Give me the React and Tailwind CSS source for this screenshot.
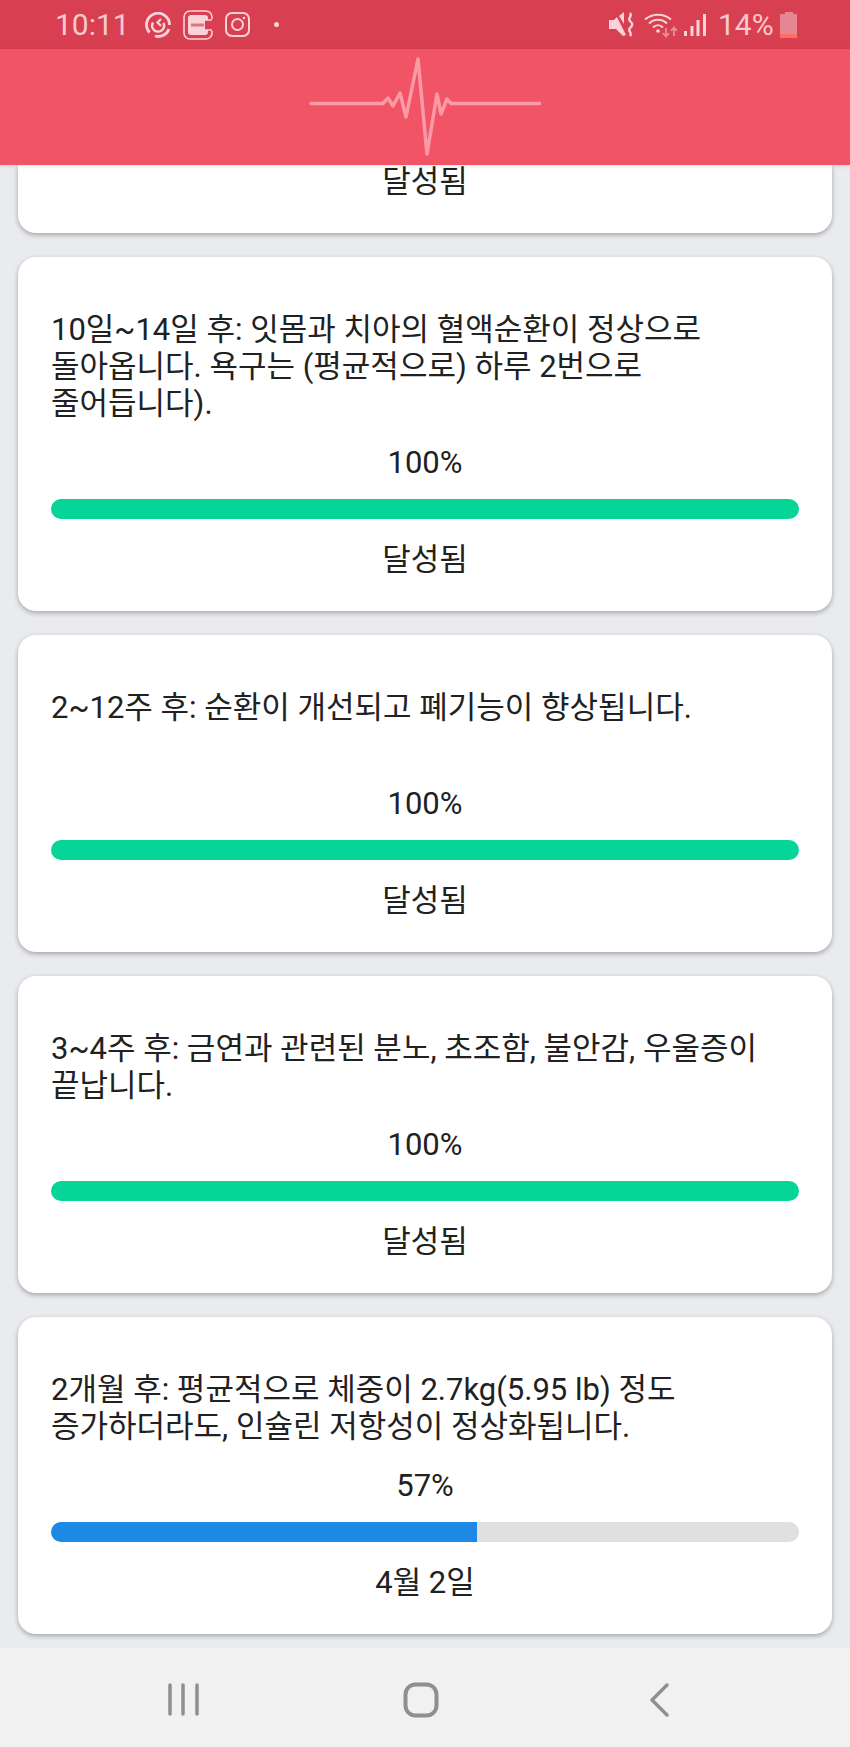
import React from 'react';

const cards = [
  { text: '10일~14일 후: 잇몸과 치아의 혈액순환이 정상으로 돌아옵니다. 욕구는 (평균적으로) 하루 2번으로 줄어듭니다).', percent: 100, label: '달성됨' },
  { text: '2~12주 후: 순환이 개선되고 폐기능이 향상됩니다.', percent: 100, label: '달성됨' },
  { text: '3~4주 후: 금연과 관련된 분노, 초조함, 불안감, 우울증이 끝납니다.', percent: 100, label: '달성됨' },
  { text: '2개월 후: 평균적으로 체중이 2.7kg(5.95 lb) 정도 증가하더라도, 인슐린 저항성이 정상화됩니다.', percent: 57, label: '4월 2일' },
];

function StatusBar() {
  return (
    <div className="h-[49px] shrink-0 bg-[#d83f50] flex items-center pl-[55px] pr-[53px] text-[#f9c9ce]">
      <span className="w-[72px] text-[30px] leading-[36px] whitespace-nowrap">10:11</span>
      <div className="flex items-center ml-[18px]">
        {/* sync app icon */}
        <svg width="26" height="26" viewBox="0 0 26 26" fill="none" stroke="#f9d3d7" strokeWidth="2.800">
          <path d="M4.500 20.500A11.500 11.500 0 1 1 24.500 13" />
          <path d="M24 17A11.500 11.500 0 0 1 10 24" />
          <path d="M8 10.500A6 6 0 1 0 18.500 11" strokeWidth="2.400" />
          <path d="M16 7l-3.500 3.500 3.500 3.500" strokeWidth="2.200" />
        </svg>
        {/* square app icon */}
        <svg width="30" height="30" viewBox="0 0 30 30" fill="none" className="ml-[12px]">
          <path d="M29 9V7a6 6 0 0 0-6-6H7a6 6 0 0 0-6 6v16a6 6 0 0 0 6 6h16a6 6 0 0 0 6-6v-2" stroke="#f9d3d7" strokeWidth="1.600" />
          <path d="M8 5h14a3 3 0 0 1 3 3v2h-3v10h3v2a3 3 0 0 1-3 3H8a3 3 0 0 1-3-3V8a3 3 0 0 1 3-3z" fill="#f9d3d7" />
          <path d="M22 10h7M22 20h7" stroke="#f9d3d7" strokeWidth="1.600" />
          <rect x="8" y="13.500" width="13" height="3" fill="#d97784" />
        </svg>
        {/* instagram */}
        <svg width="25" height="25" viewBox="0 0 25 25" fill="none" stroke="#f9d3d7" strokeWidth="2" className="ml-[12px]">
          <rect x="1" y="1" width="23" height="23" rx="6" />
          <circle cx="12.500" cy="12.500" r="5.500" />
          <circle cx="19" cy="6" r="1.300" fill="#f9d3d7" stroke="none" />
        </svg>
        <div className="w-[5px] h-[5px] rounded-full bg-[#f9d3d7] ml-[24px]" />
      </div>
      <div className="flex items-center ml-auto">
        {/* vibrate / mute */}
        <svg width="25" height="25" viewBox="0 0 25 25">
          <path d="M0 8h5l3-3 9 18-3 1-7-7H0z" fill="#f9d3d7" />
          <path d="M10 4l5-4v12z" fill="#f9d3d7" />
          <path d="M21 1c3 3-3 5 0 8s3 4 0 7 3 5 0 8" fill="none" stroke="#f9d3d7" strokeWidth="2.400" />
        </svg>
        {/* wifi with up and down arrows */}
        <svg width="34" height="26" viewBox="0 0 34 26" fill="none" className="ml-[10px]">
          <path d="M1 7.500C8 1 20 1 27 7.500" stroke="#f9d3d7" strokeWidth="2" />
          <path d="M5 11.500c5-5 13-5 18 0" stroke="#f9d3d7" strokeWidth="2" />
          <path d="M9 15.500c3-3 7-3 10 0" stroke="#f9d3d7" strokeWidth="2" />
          <circle cx="14" cy="19" r="1.800" fill="#f9d3d7" />
          <path d="M22 16v8M19 21l3 3.500 3-3.500" stroke="#e88d98" strokeWidth="1.800" />
          <path d="M30 24v-8M27 19l3-3.500 3 3.500" stroke="#e88d98" strokeWidth="1.800" />
        </svg>
        {/* signal */}
        <svg width="22" height="24" viewBox="0 0 22 24" fill="#f9d3d7" className="ml-[6px]">
          <rect x="0" y="18" width="3" height="5" />
          <rect x="6.500" y="13" width="3" height="10" />
          <rect x="12.500" y="7" width="3" height="16" />
          <rect x="19" y="1" width="3" height="22" />
        </svg>
        <span className="w-[55px] text-[30px] leading-[36px] ml-[12px] whitespace-nowrap">14%</span>
        {/* battery */}
        <div className="ml-[7px] w-[17px] h-[26px] flex flex-col items-center">
          <div className="w-[8px] h-[2px] bg-[#e58692]" />
          <div className="w-[17px] h-[24px] bg-[#e58692] flex flex-col justify-end rounded-[1px]">
            <div className="h-[4px] bg-[#fb7060]" />
          </div>
        </div>
      </div>
    </div>
  );
}

function Header() {
  return (
    <div className="relative z-10 h-[116px] shrink-0 bg-[#f15464] shadow-[0_1px_4px_rgba(0,0,0,0.12)] flex items-center justify-center">
      <svg width="232" height="100" viewBox="309 58 232 100" fill="none" stroke="#fb9aa6" strokeWidth="3.500" strokeLinejoin="round" strokeLinecap="round">
        <path d="M311 104.500H383L388 99L393 107L400 94L406 118L418 60L427 155L437 95L441 115L447 100L451 104.500H540" />
      </svg>
    </div>
  );
}

function Card({ text, percent, label }) {
  const done = percent === 100;
  return (
    <div className="shrink-0 bg-white rounded-[18px] shadow-[0_2px_5px_rgba(0,0,0,0.3)] px-[33px] pt-[54px] pb-[33px] text-[#212121]">
      <p className="min-h-[74px] text-[31px] leading-[37px] [word-break:keep-all]">{text}</p>
      <p className="mt-[22px] text-center text-[31px] leading-[37px]">{percent}%</p>
      <div className="mt-[18px] h-[20px] rounded-full bg-[#e0e0e0] overflow-hidden">
        <div className={done ? 'h-full bg-[#06d598]' : 'h-full bg-[#1e88e5]'} style={{ width: `${percent}%` }} />
      </div>
      <p className="mt-[22px] text-center text-[31px] leading-[37px]">{label}</p>
    </div>
  );
}

function NavBar() {
  return (
    <div className="h-[99px] shrink-0 bg-[#f1f1f1] flex items-center justify-center">
      <svg width="850" height="99" viewBox="0 1648 850 99" fill="none" stroke="#8f8f8f" strokeLinecap="round" strokeLinejoin="round">
        <path d="M170 1685v29M183 1685v29M197 1685v29" strokeWidth="3.500" />
        <rect x="405.500" y="1684.500" width="31" height="31" rx="10" strokeWidth="4" />
        <path d="M667 1685l-15 15 15 15" strokeWidth="3.500" />
      </svg>
    </div>
  );
}

export default function App() {
  return (
    <div className="w-[850px] h-[1747px] flex flex-col bg-[#e9ebef] overflow-hidden font-['Roboto','Noto_Sans_CJK_KR',sans-serif]">
      <StatusBar />
      <Header />
      <div className="flex-1 min-h-0 overflow-hidden flex flex-col justify-end gap-[24px] px-[18px] pb-[14px]">
        {/* bottom of the card scrolled under the header */}
        <div className="shrink-0 bg-white rounded-b-[18px] shadow-[0_2px_5px_rgba(0,0,0,0.3)] pb-[35px] text-center text-[31px] leading-[33px] text-[#212121]">
          달성됨
        </div>
        {cards.map((card, i) => (
          <Card key={i} {...card} />
        ))}
      </div>
      <NavBar />
    </div>
  );
}
